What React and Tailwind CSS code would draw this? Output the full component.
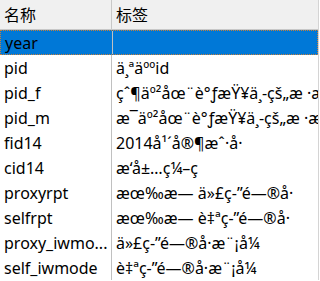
const rows = [
  { name: "year", label: "" },
  { name: "pid", label: "ä¸ªäººid" },
  { name: "pid_f", label: "çˆ¶äº²åœ¨è°ƒæŸ¥ä¸-çš„æ\u00a0·æœ¬ç¼–å·" },
  { name: "pid_m", label: "æ¯äº²åœ¨è°ƒæŸ¥ä¸-çš„æ\u00a0·æœ¬ç¼–å·" },
  { name: "fid14", label: "2014å¹´å®¶æˆ·å·" },
  { name: "cid14", label: "æ\u2018å±…ç¼–ç" },
  { name: "proxyrpt", label: "æœ‰æ—\u00a0ä»£ç-\u201Dé—®å·" },
  { name: "selfrpt", label: "æœ‰æ—\u00a0è‡ªç-\u201Dé—®å·" },
  { name: "proxy_iwmo...", label: "ä»£ç-\u201Dé—®å·æ¨¡å¼" },
  { name: "self_iwmode", label: "è‡ªç-\u201Dé—®å·æ¨¡å¼" },
];

function App() {
  const selected = 0;

  return (
    <div
      className="h-[281px] w-[320px] overflow-hidden bg-white text-[16px] text-black"
      style={{ fontFamily: '"Noto Sans", "Noto Sans CJK SC", sans-serif' }}
    >
      <div className="w-[319px] border-r border-[#d4d4d4]">
        <div className="grid h-[30px] grid-cols-[112px_1fr] border-b border-[#c8c8c8] bg-[#f0f0f0]">
          <div className="flex items-center border-r border-[#c8c8c8] pl-[4px]">名称</div>
          <div className="flex items-center pl-[4px]">标签</div>
        </div>

        {rows.map((row, index) => (
          <div
            key={row.name}
            className={
              index === selected
                ? "grid h-[25px] grid-cols-[112px_1fr] border border-dotted border-[#c8803a] bg-[#0078d7]"
                : "grid h-[25px] grid-cols-[112px_1fr]"
            }
          >
            <div className="flex items-center overflow-hidden whitespace-nowrap border-r border-[#c0c0c0] pl-[4px]">
              {row.name}
            </div>
            <div className="flex items-center overflow-hidden whitespace-nowrap pl-[4px]">
              {row.label}
            </div>
          </div>
        ))}
      </div>
    </div>
  );
}

export default App;
